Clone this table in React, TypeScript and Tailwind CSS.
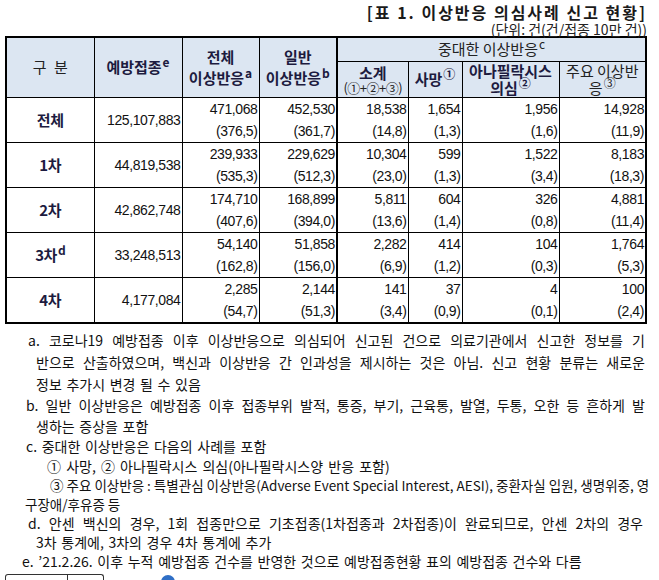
import React from "react";

const rows = [
  {
    label: "전체",
    sup: "",
    dose: "125,107,883",
    vals: [
      ["471,068", "(376,5)"],
      ["452,530", "(361,7)"],
      ["18,538", "(14,8)"],
      ["1,654", "(1,3)"],
      ["1,956", "(1,6)"],
      ["14,928", "(11,9)"],
    ],
  },
  {
    label: "1차",
    sup: "",
    dose: "44,819,538",
    vals: [
      ["239,933", "(535,3)"],
      ["229,629", "(512,3)"],
      ["10,304", "(23,0)"],
      ["599", "(1,3)"],
      ["1,522", "(3,4)"],
      ["8,183", "(18,3)"],
    ],
  },
  {
    label: "2차",
    sup: "",
    dose: "42,862,748",
    vals: [
      ["174,710", "(407,6)"],
      ["168,899", "(394,0)"],
      ["5,811", "(13,6)"],
      ["604", "(1,4)"],
      ["326", "(0,8)"],
      ["4,881", "(11,4)"],
    ],
  },
  {
    label: "3차",
    sup: "d",
    dose: "33,248,513",
    vals: [
      ["54,140", "(162,8)"],
      ["51,858", "(156,0)"],
      ["2,282", "(6,9)"],
      ["414", "(1,2)"],
      ["104", "(0,3)"],
      ["1,764", "(5,3)"],
    ],
  },
  {
    label: "4차",
    sup: "",
    dose: "4,177,084",
    vals: [
      ["2,285", "(54,7)"],
      ["2,144", "(51,3)"],
      ["141", "(3,4)"],
      ["37", "(0,9)"],
      ["4", "(0,1)"],
      ["100", "(2,4)"],
    ],
  },
];

const Sup = ({ children }: { children: React.ReactNode }) => (
  <span className="relative -top-[6px] ml-[1px] text-[12px]">{children}</span>
);

const head = "border border-black bg-[#dce6f2] p-0 text-center align-middle";
const bold = "font-bold text-[15px] text-[#1d1b3f]";

export default function App() {
  return (
    <div className="w-[659px] h-[580px] overflow-hidden bg-white text-black font-['Noto_Sans_CJK_KR',sans-serif]">
      <div className="pt-[3px] pr-[12px] text-right">
        <div className="text-[16px] leading-[19px] font-bold tracking-[2px] text-[#1a1a1a]">
          [표 1. 이상반응 의심사례 신고 현황]
        </div>
        <div className="text-[14px] leading-[14px] text-[#222]">(단위: 건(건/접종 10만 건))</div>
      </div>

      <table className="ml-[5px] w-[640px] table-fixed border-collapse border-2 border-black">
        <colgroup>
          <col className="w-[88px]" />
          <col className="w-[88px]" />
          <col className="w-[77px]" />
          <col className="w-[78px]" />
          <col className="w-[71px]" />
          <col className="w-[54px]" />
          <col className="w-[97px]" />
          <col className="w-[87px]" />
        </colgroup>
        <thead>
          <tr className="h-[24px]">
            <td rowSpan={2} className={`${head} text-[15px] text-[#222] [word-spacing:4px]`}>
              구 분
            </td>
            <td rowSpan={2} className={`${head} ${bold}`}>
              예방접종<Sup>e</Sup>
            </td>
            <td rowSpan={2} className={`${head} ${bold} leading-[21px]`}>
              전체
              <br />
              이상반응<Sup>a</Sup>
            </td>
            <td rowSpan={2} className={`${head} ${bold} leading-[21px]`}>
              일반
              <br />
              이상반응<Sup>b</Sup>
            </td>
            <td colSpan={4} className={`${head} border-l-2 text-[15px] text-[#222] leading-[22px]`}>
              중대한 이상반응<Sup>c</Sup>
            </td>
          </tr>
          <tr className="h-[35px]">
            <td className={`${head} border-l-2 leading-[15px]`}>
              <div className={bold}>소계</div>
              <div className="text-[13px] text-[#222] tracking-[-0.5px]">(①+②+③)</div>
            </td>
            <td className={`${head} ${bold}`}>
              사망<Sup>①</Sup>
            </td>
            <td className={`${head} ${bold} leading-[17px]`}>
              아나필락시스
              <br />
              의심<Sup>②</Sup>
            </td>
            <td className={`${head} text-[15px] text-[#222] leading-[17px]`}>
              주요 이상반
              <br />
              응<Sup>③</Sup>
            </td>
          </tr>
        </thead>
        <tbody className="font-['Liberation_Sans','Noto_Sans_CJK_KR',sans-serif] text-[14px] tracking-[-0.4px] text-[#111]">
          {rows.map((r) => (
            <tr key={r.label} className="h-[45px]">
              <td className="border border-black p-0 text-center align-middle font-['Noto_Sans_CJK_KR',sans-serif] font-bold text-[15px] text-[#1d1b3f]">
                {r.label}
                {r.sup && <Sup>{r.sup}</Sup>}
              </td>
              <td className="border border-black p-0 pr-[1px] text-right align-middle">{r.dose}</td>
              {r.vals.map((v, i) => (
                <td
                  key={i}
                  className={`border border-black p-0 pr-[1px] text-right align-middle leading-[22px] ${i === 2 ? "border-l-2" : ""}`}
                >
                  <div>{v[0]}</div>
                  <div>{v[1]}</div>
                </td>
              ))}
            </tr>
          ))}
        </tbody>
      </table>

      <div className="mt-[5px] text-[14px] leading-[22px] text-[#111] [word-spacing:1.5px]">
        <div className="ml-[28px] mr-[14px] whitespace-nowrap [text-align-last:justify]">
          a. 코로나19 예방접종 이후 이상반응으로 의심되어 신고된 건으로 의료기관에서 신고한 정보를 기
        </div>
        <div className="ml-[36px] mr-[14px] whitespace-nowrap [text-align-last:justify]">
          반으로 산출하였으며, 백신과 이상반응 간 인과성을 제시하는 것은 아님. 신고 현황 분류는 새로운
        </div>
        <div className="ml-[36px] whitespace-nowrap">정보 추가시 변경 될 수 있음</div>
        <div className="ml-[26px] mr-[14px] whitespace-nowrap leading-[21px] [text-align-last:justify]">
          b. 일반 이상반응은 예방접종 이후 접종부위 발적, 통증, 부기, 근육통, 발열, 두통, 오한 등 흔하게 발
        </div>
        <div className="ml-[36px] whitespace-nowrap leading-[20px]">생하는 증상을 포함</div>
        <div className="ml-[26px] whitespace-nowrap leading-[21px]">c. 중대한 이상반응은 다음의 사례를 포함</div>
        <div className="ml-[47px] whitespace-nowrap leading-[19px] [word-spacing:2px]">
          ① 사망, ② 아나필락시스 의심(아나필락시스양 반응 포함)
        </div>
        <div className="ml-[50px] mr-[14px] whitespace-nowrap leading-[19px] text-[13.5px] [word-spacing:0px] [text-align-last:justify]">
          ③ 주요 이상반응 : 특별관심 이상반응(Adverse Event Special Interest, AESI), 중환자실 입원, 생명위중, 영
        </div>
        <div className="ml-[25px] whitespace-nowrap leading-[19px] text-[13.5px] [word-spacing:0px]">구장애/후유증 등</div>
        <div className="ml-[28px] mr-[16px] whitespace-nowrap leading-[19px] [text-align-last:justify]">
          d. 안센 백신의 경우, 1회 접종만으로 기초접종(1차접종과 2차접종)이 완료되므로, 안센 2차의 경우
        </div>
        <div className="ml-[36px] whitespace-nowrap leading-[19px]">3차 통계에, 3차의 경우 4차 통계에 추가</div>
        <div className="ml-[22px] whitespace-nowrap leading-[19px]">
          e. ’21.2.26. 이후 누적 예방접종 건수를 반영한 것으로 예방접종현황 표의 예방접종 건수와 다름
        </div>
      </div>

      <div className="mt-[3px] ml-[5px] flex items-start gap-[57px]">
        <div className="flex h-[14px] rounded-t-[3px] border border-b-0 border-[#333]">
          <div className="w-[62px] border-r border-[#333]" />
          <div className="w-[35px]" />
        </div>
        <div className="mt-[1px] h-[14px] w-[14px] rounded-full bg-[#2f6fc6]" />
      </div>
    </div>
  );
}
